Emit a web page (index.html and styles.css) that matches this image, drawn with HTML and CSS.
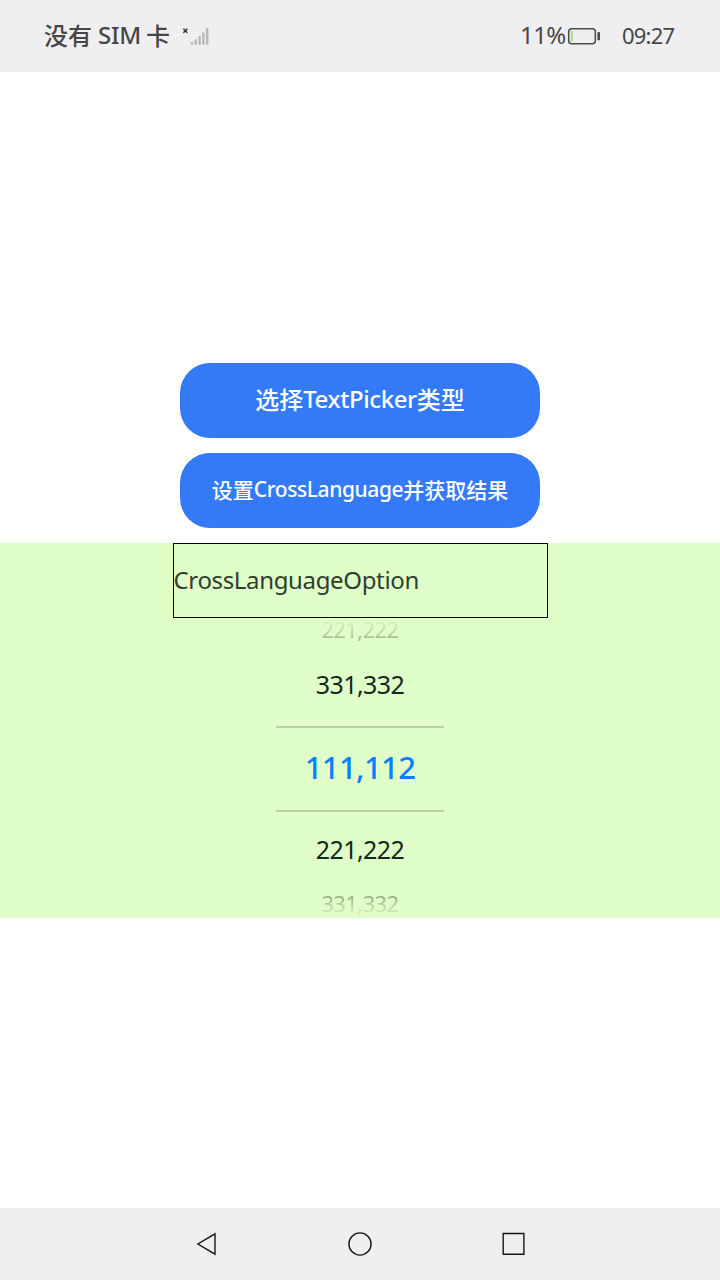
FILE: index.html
```html
<!DOCTYPE html>
<html lang="zh-CN">
<head>
<meta charset="utf-8">
<title>TextPicker</title>
<link rel="stylesheet" href="styles.css">
</head>
<body>
<header class="status">
  <span class="carrier"><span class="cjk">没有</span><span class="sim">SIM</span><span class="cjk">卡</span></span>
  <svg class="signal" width="28" height="20" viewBox="0 0 28 20">
    <path d="M1.4 2.8l4 4M5.4 2.8l-4 4" stroke="#333" stroke-width="1.5"/>
    <path d="M10 16v2.8M13.8 13.5v5.3M17.6 10v8.8M21.4 6.5v12.3M25.2 2v16.8" stroke="#bababb" stroke-width="2.4"/>
  </svg>
  <span class="percent">11%</span>
  <svg class="battery" width="34" height="18" viewBox="0 0 34 18">
    <rect x="1.7" y="1.7" width="26.6" height="15" rx="3" fill="none" stroke="#4b4b4c" stroke-width="1.5"/>
    <path d="M4.8 4v10.5" stroke="#a5dc94" stroke-width="2"/>
    <path d="M31.7 5.2v8" stroke="#4b4b4c" stroke-width="2.6"/>
  </svg>
  <span class="clock">09:27</span>
</header>
<main class="page">
  <button class="btn"><span class="cjk">选择</span><span class="latin">TextPicker</span><span class="cjk">类型</span></button>
  <button class="btn small"><span class="cjk">设置</span><span class="latin">CrossLanguage</span><span class="cjk">并获取结果</span></button>
  <section class="panel">
    <div class="option"><span>CrossLanguageOption</span></div>
    <div class="picker">
      <div class="item far top">221,222</div>
      <div class="item above">331,332</div>
      <div class="item selected">111,112</div>
      <div class="item">221,222</div>
      <div class="item far bottom">331,332</div>
    </div>
  </section>
</main>
<nav class="nav">
  <svg width="24" height="24" viewBox="0 0 24 24"><path d="M21 1.8v20.4L3.9 12z"/></svg>
  <svg width="24" height="24" viewBox="0 0 24 24"><circle cx="12" cy="12" r="11.1"/></svg>
  <svg width="24" height="24" viewBox="0 0 24 24"><path d="M1.2 1.5h20.7v20.7H1.2z"/></svg>
</nav>
</body>
</html>
```

FILE: styles.css
```css
* { box-sizing: border-box; }
body {
  margin: 0;
  height: 1280px;
  display: flex;
  flex-direction: column;
  background: #fff;
  font-family: "Noto Sans", "Noto Sans CJK SC", sans-serif;
  font-size: 24px;
  overflow: hidden;
}
.cjk { font-family: "Noto Sans CJK SC", sans-serif; }
.status {
  height: 72px;
  flex: none;
  display: flex;
  align-items: center;
  padding: 0 45px 3px 44px;
  background: #efeff1;
  color: #464647;
  line-height: 36px;
  white-space: nowrap;
}
.carrier { display: flex; font-weight: 500; width: 126px; }
.sim { width: 42px; margin: 0 6px 0 6px; letter-spacing: -0.2px; }
.signal { margin-left: 12px; margin-top: 2px; }
.percent { margin-left: auto; width: 47px; letter-spacing: -0.6px; }
.battery { margin-top: 3px; }
.clock { margin-left: 21px; width: 53px; font-size: 22px; letter-spacing: -0.8px; }
.page {
  flex: 1;
  display: flex;
  flex-direction: column;
  align-items: center;
  justify-content: center;
  gap: 15px;
}
.btn {
  width: 360px;
  height: 75px;
  border: 0;
  border-radius: 30px;
  padding: 0 0 2px;
  display: flex;
  align-items: center;
  justify-content: center;
  background: #347af6;
  color: #fff;
  font: 500 24px/36px "Noto Sans", sans-serif;
}
.btn .latin { letter-spacing: -0.4px; }
.btn.small { font-size: 21px; }
.btn.small .latin { letter-spacing: -0.4px; }
.panel {
  width: 100%;
  height: 375px;
  display: flex;
  flex-direction: column;
  align-items: center;
  background: #e0fec7;
}
.option {
  width: 375px;
  height: 75px;
  border: 1px solid #000;
  padding-bottom: 2px;
  display: flex;
  align-items: center;
  color: #2d402f;
  letter-spacing: -0.35px;
}
.picker {
  width: 168px;
  height: 300px;
  display: grid;
  grid-template-rows: 24px 84px 86px 74px 32px;
}
.item {
  display: flex;
  align-items: center;
  justify-content: center;
  font-size: 25px;
  line-height: 24px;
  letter-spacing: -0.6px;
  color: #102a21;
}
.item.above { padding-top: 1px; }
.item.selected {
  border-top: 2px solid #b8d2a4;
  border-bottom: 2px solid #b8d2a4;
  padding-bottom: 4px;
  font-size: 31px;
  line-height: 42px;
  font-weight: 500;
  color: #087fff;
}
.item.far {
  font-size: 22px;
  line-height: 30px;
  color: transparent;
  background-clip: text;
  -webkit-background-clip: text;
}
.item.top {
  height: 30px;
  margin-top: -4px;
  background-image: linear-gradient(#e0fec7 5px, #a2bd91 25px);
}
.item.bottom {
  padding-top: 2px;
  background-image: linear-gradient(#92ab83 10px, #e0fec7 31px);
}
.nav {
  height: 72px;
  flex: none;
  display: flex;
  justify-content: center;
  align-items: center;
  gap: 130px;
  background: #efeff1;
}
.nav svg { fill: none; stroke: #17171a; stroke-width: 1.4; }
```
